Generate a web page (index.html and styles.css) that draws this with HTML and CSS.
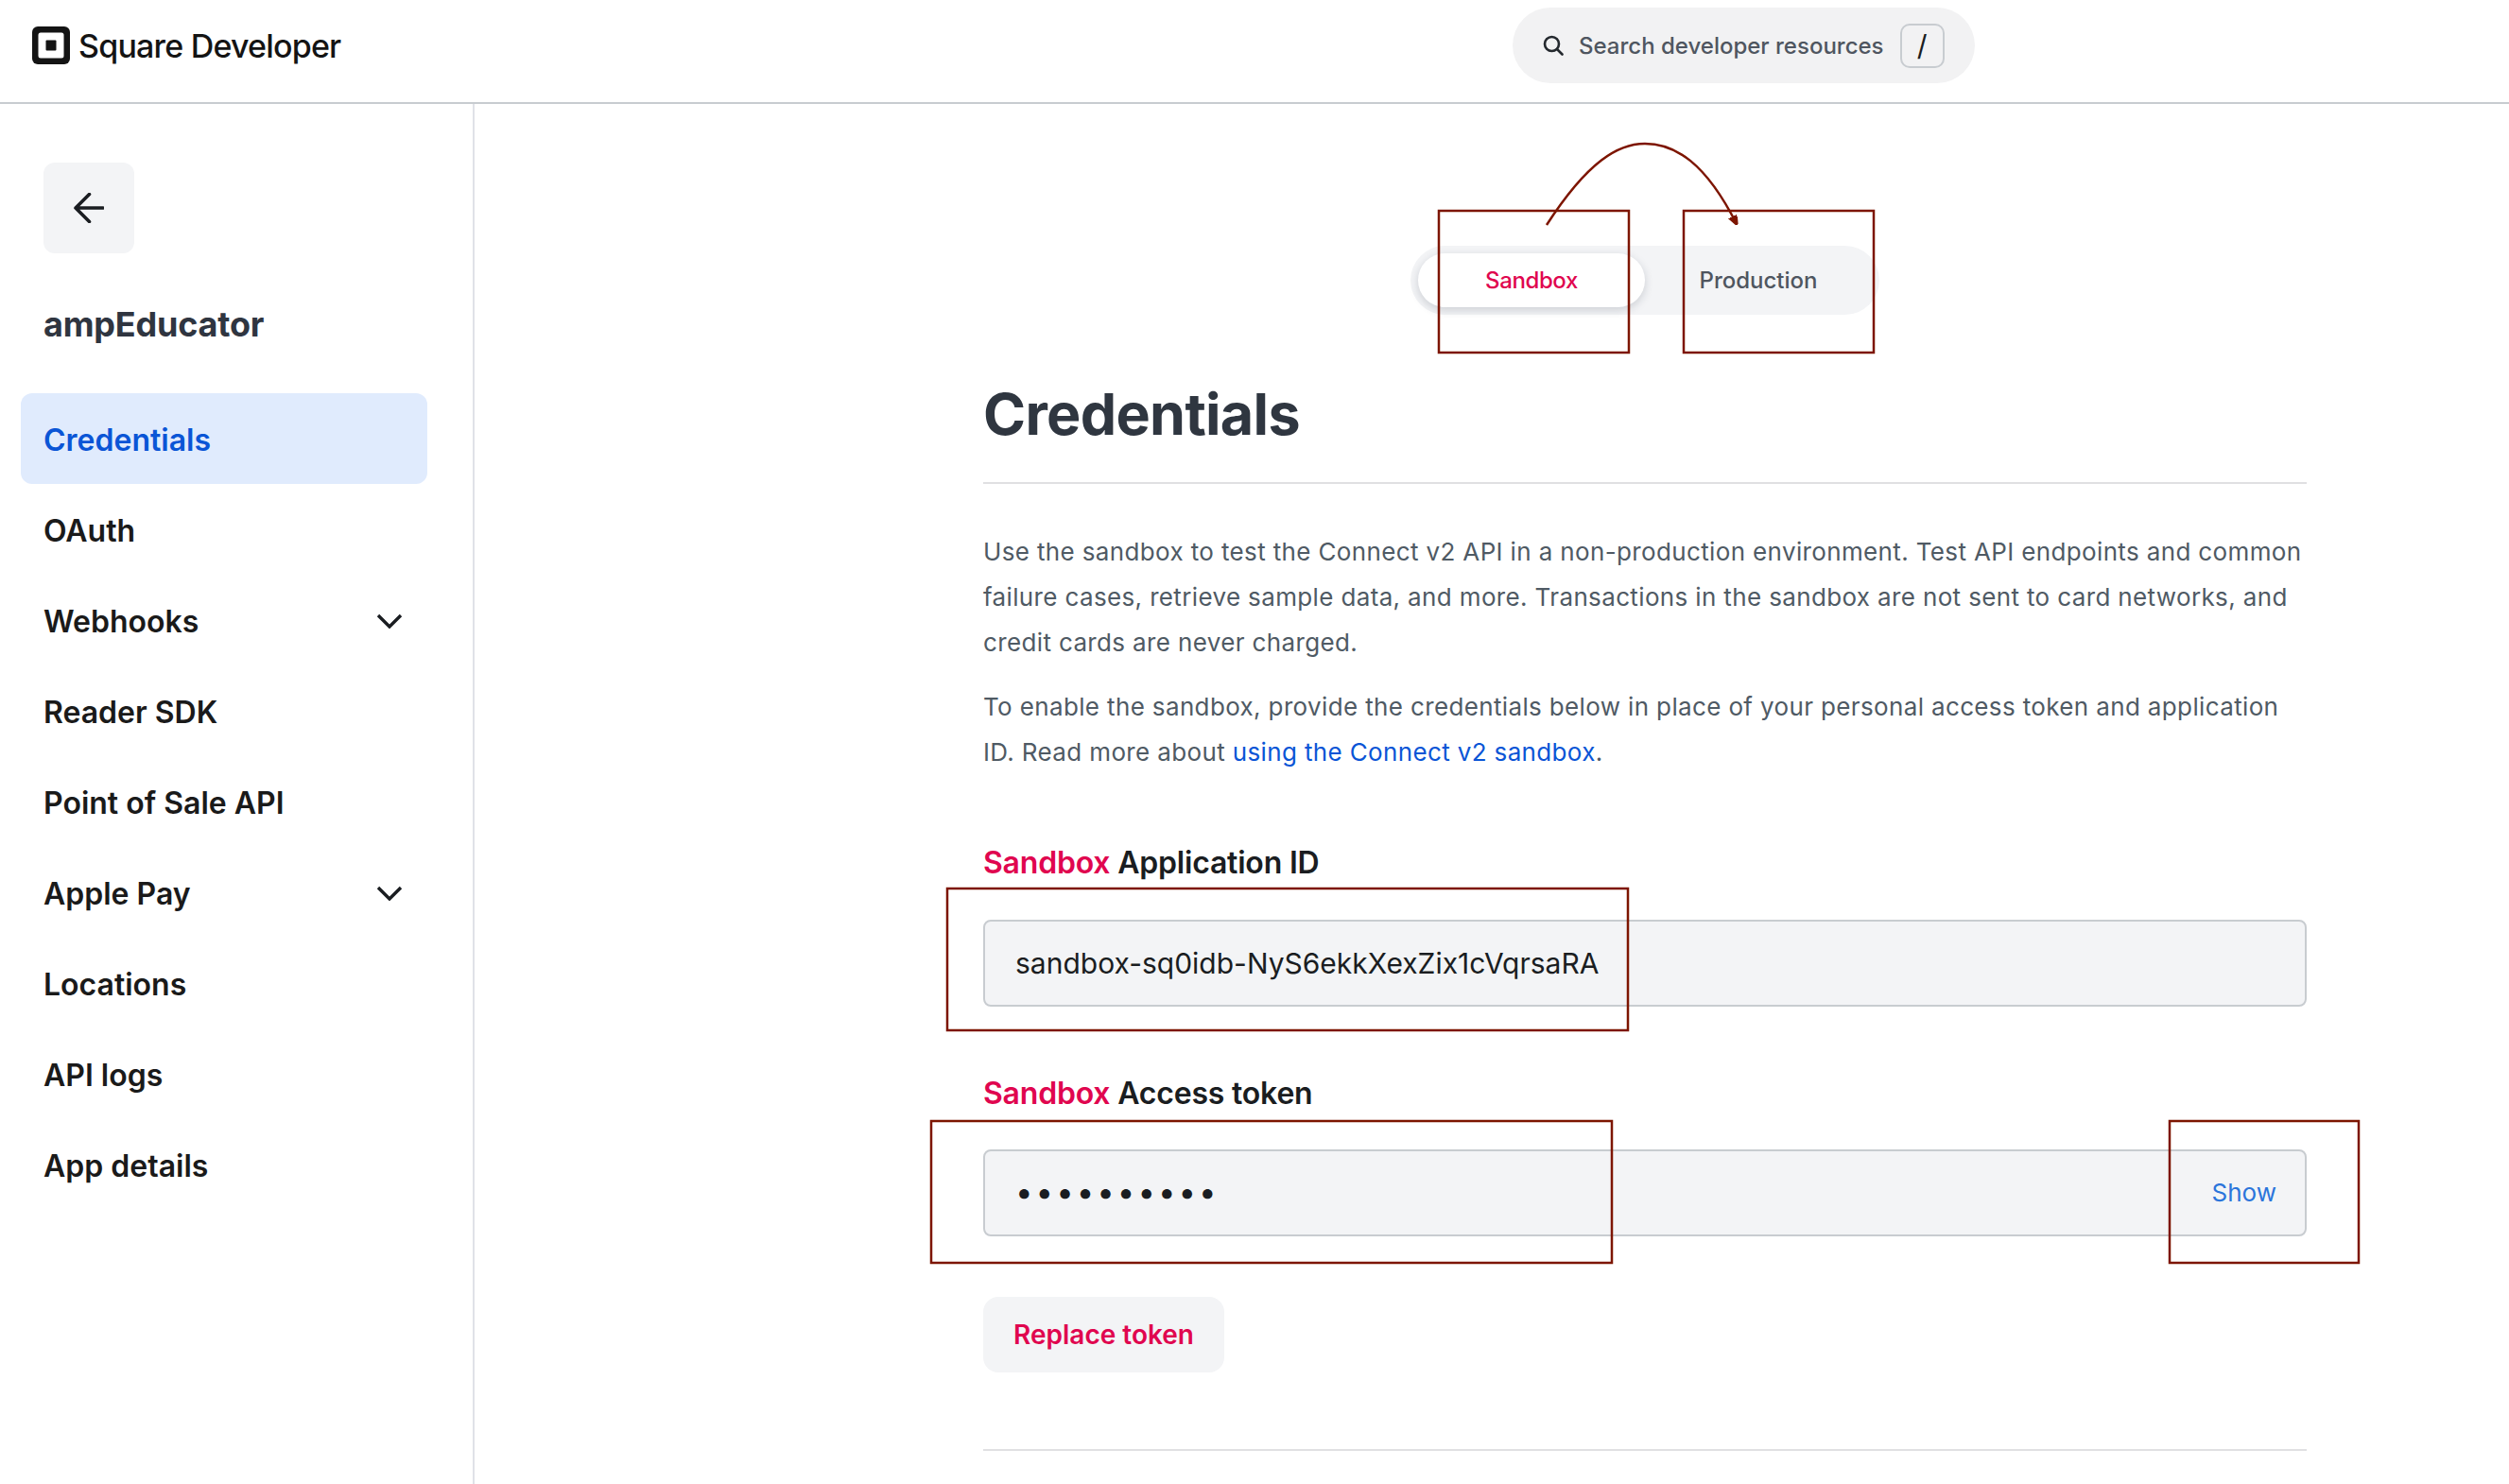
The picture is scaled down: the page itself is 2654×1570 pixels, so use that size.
FILE: index.html
```html
<!DOCTYPE html>
<html lang="en">
<head>
    <meta charset="UTF-8">
    <meta name="viewport" content="width=device-width, initial-scale=1.0">
    <title>Square Developer - Credentials</title>
    <link rel="stylesheet" href="styles.css">
</head>
<body>
    <header class="top-bar">
        <a class="brand">
            <svg class="brand-logo" viewBox="0 0 40 40">
                <rect width="40" height="40" rx="6" fill="#141414"/>
                <rect x="6.5" y="6.5" width="27" height="27" rx="2.5" fill="#fff"/>
                <rect x="14.5" y="14.5" width="11" height="11" rx="1" fill="#141414"/>
            </svg>
            <span class="brand-name">Square Developer</span>
        </a>
        <div class="search">
            <svg class="search-icon" viewBox="0 0 22 22">
                <circle cx="9.5" cy="9.5" r="7.5" fill="none" stroke="#24292e" stroke-width="2.6"/>
                <path d="M15 15l5.5 5.5" fill="none" stroke="#24292e" stroke-width="2.6" stroke-linecap="round"/>
            </svg>
            <span class="search-text">Search developer resources</span>
            <span class="search-key">/</span>
        </div>
    </header>

    <div class="page">
        <aside class="sidebar">
            <button class="back-button">
                <svg viewBox="0 0 32 32" width="32" height="32">
                    <path d="M31 16H2M16.5 1.5L2 16l14.5 14.5" fill="none" stroke="#1a1d21" stroke-width="3.6" stroke-linecap="round" stroke-linejoin="round"/>
                </svg>
            </button>
            <h2 class="app-name">ampEducator</h2>
            <nav class="side-nav">
                <a class="nav-item active">Credentials</a>
                <a class="nav-item">OAuth</a>
                <a class="nav-item">Webhooks
                    <svg class="chevron" viewBox="0 0 28 16"><path d="M2 2l12 12L26 2"/></svg>
                </a>
                <a class="nav-item">Reader SDK</a>
                <a class="nav-item">Point of Sale API</a>
                <a class="nav-item">Apple Pay
                    <svg class="chevron" viewBox="0 0 28 16"><path d="M2 2l12 12L26 2"/></svg>
                </a>
                <a class="nav-item">Locations</a>
                <a class="nav-item">API logs</a>
                <a class="nav-item">App details</a>
            </nav>
        </aside>

        <main class="content">
            <div class="toggle-row">
                <div class="env-toggle">
                    <span class="env-tab selected">Sandbox</span>
                    <span class="env-tab">Production</span>
                </div>
            </div>

            <h1 class="page-title">Credentials</h1>

            <p class="intro">Use the sandbox to test the Connect v2 API in a non-production environment. Test API endpoints and common failure cases, retrieve sample data, and more. Transactions in the sandbox are not sent to card networks, and credit cards are never charged.</p>
            <p class="intro second">To enable the sandbox, provide the credentials below in place of your personal access token and application ID. Read more about <a class="link">using the Connect v2 sandbox</a>.</p>

            <div class="field-label"><span class="env-word">Sandbox</span> Application ID</div>
            <div class="field">sandbox-sq0idb-NyS6ekkXexZix1cVqrsaRA</div>

            <div class="field-label"><span class="env-word">Sandbox</span> Access token</div>
            <div class="field">
                <span class="dots">••••••••••</span>
                <span class="show-link">Show</span>
            </div>

            <button class="replace-button">Replace token</button>
            <hr class="section-rule">
        </main>
    </div>

    <!-- red annotations drawn on top of the screenshot -->
    <svg class="annotations" viewBox="0 0 2654 1570">
        <defs>
            <marker id="arrow-head" markerWidth="10" markerHeight="10" refX="9" refY="4" orient="auto" markerUnits="userSpaceOnUse">
                <path d="M0 0L10 4L0 8z" fill="#7d1500"/>
            </marker>
        </defs>
        <rect x="1522" y="223" width="201" height="150"/>
        <rect x="1781" y="223" width="201" height="150"/>
        <rect x="1002" y="940" width="720" height="150"/>
        <rect x="985" y="1186" width="720" height="150"/>
        <rect x="2295" y="1186" width="200" height="150"/>
        <path d="M1636 238C1680 170 1712 152 1740 152C1772 152 1804 172 1837 237" marker-end="url(#arrow-head)"/>
    </svg>
</body>
</html>
```

FILE: styles.css
```css
html, body {
    height: 100%;
    overflow: hidden;
}

body {
    margin: 0;
    position: relative;
    font-family: Inter, "Liberation Sans", sans-serif;
    background-color: #fff;
    color: #1a1d21;
}

.top-bar {
    height: 96px;
    padding: 0 565px 12px 34px;
    border-bottom: 2px solid #c8ccd0;
    display: flex;
    align-items: center;
    justify-content: space-between;
}

.brand {
    display: flex;
    align-items: center;
    gap: 9px;
}

.brand-logo {
    width: 40px;
    height: 40px;
}

.brand-name {
    font-size: 34px;
    font-weight: 500;
    letter-spacing: -0.8px;
    color: #141414;
}

.search {
    width: 489px;
    height: 80px;
    box-sizing: border-box;
    padding-left: 32px;
    background-color: #f2f2f3;
    border-radius: 40px;
    display: flex;
    align-items: center;
}

.search-icon {
    width: 22px;
    height: 22px;
    margin-right: 16px;
}

.search-text {
    font-size: 24px;
    font-weight: 500;
    color: #4f5660;
    white-space: nowrap;
}

.search-key {
    margin-left: 17px;
    width: 47px;
    height: 47px;
    box-sizing: border-box;
    border: 2px solid #c8ccd0;
    border-radius: 10px;
    display: flex;
    align-items: center;
    justify-content: center;
    font-size: 30px;
    color: #1a1d21;
}

.page {
    display: flex;
    height: calc(100% - 110px);
}

.sidebar {
    width: 500px;
    flex-shrink: 0;
    border-right: 2px solid #e0e2e8;
    padding-top: 62px;
}

.back-button {
    display: flex;
    align-items: center;
    justify-content: center;
    width: 96px;
    height: 96px;
    margin-left: 46px;
    padding: 0;
    border: none;
    border-radius: 12px;
    background-color: #f3f4f6;
}

.app-name {
    margin: 51px 0 49px 46px;
    font-size: 36px;
    line-height: 48px;
    font-weight: 700;
    letter-spacing: -0.2px;
    color: #2f3540;
}

.side-nav {
    margin-left: 22px;
    width: 430px;
}

.nav-item {
    height: 96px;
    box-sizing: border-box;
    padding: 2px 24px 0;
    display: flex;
    align-items: center;
    justify-content: space-between;
    border-radius: 12px;
    font-size: 32px;
    font-weight: 600;
    color: #1a1a1a;
}

.nav-item.active {
    background-color: #e0ebfd;
    color: #0a55d6;
}

.chevron {
    width: 28px;
    height: 16px;
    margin-right: 2px;
    fill: none;
    stroke: #1a1d21;
    stroke-width: 3.4;
}

.content {
    width: 1400px;
    margin-left: 538px;
    padding-top: 150px;
}

.toggle-row {
    display: flex;
    justify-content: center;
}

.env-toggle {
    display: flex;
    padding: 8px;
    background-color: #f3f4f6;
    border-radius: 37px;
}

.env-tab {
    width: 240px;
    height: 57px;
    display: flex;
    align-items: center;
    justify-content: center;
    font-size: 24px;
    font-weight: 500;
    color: #4f5660;
    border-radius: 29px;
}

.env-tab.selected {
    background-color: #fff;
    color: #e0064f;
    letter-spacing: -0.4px;
    box-shadow: 0 3px 10px rgba(30, 40, 60, 0.18);
}

.page-title {
    margin: 67px 0 0;
    padding-bottom: 34px;
    border-bottom: 2px solid #e0e0e2;
    font-size: 61px;
    line-height: 76px;
    font-weight: 700;
    letter-spacing: -0.7px;
    color: #2f3640;
}

.intro {
    margin: 48px 0 0;
    font-size: 26px;
    line-height: 48px;
    letter-spacing: 0.36px;
    color: #4f5a64;
}

.intro.second {
    margin-top: 20px;
}

.link {
    color: #0a55d6;
}

.field-label {
    margin-top: 73px;
    font-size: 32px;
    line-height: 40px;
    font-weight: 600;
    letter-spacing: -0.2px;
    color: #1a1d21;
}

.field-label + .field {
    margin-top: 40px;
}

.field + .field-label {
    margin-top: 72px;
}

.field-label + .field + .field-label + .field {
    margin-top: 39px;
}

.env-word {
    color: #e0064f;
}

.field {
    height: 92px;
    box-sizing: border-box;
    padding: 0 30px 0 32px;
    display: flex;
    align-items: center;
    justify-content: space-between;
    background-color: #f3f4f6;
    border: 2px solid #c8ccd0;
    border-radius: 8px;
    font-size: 30px;
    color: #1a1d21;
}

.dots {
    margin-bottom: 2px;
    font-size: 33px;
    line-height: 1;
    letter-spacing: 3px;
}

.show-link {
    margin-bottom: 2px;
    font-size: 26px;
    color: #2b75db;
}

.replace-button {
    display: block;
    margin-top: 64px;
    width: 255px;
    height: 80px;
    padding: 0;
    border: none;
    border-radius: 16px;
    background-color: #f3f4f6;
    font-family: inherit;
    font-size: 28px;
    font-weight: 600;
    color: #e0064f;
}

.section-rule {
    margin: 81px 0 0;
    border: none;
    border-top: 2px solid #e0e0e2;
}

.annotations {
    position: absolute;
    left: 0;
    top: 0;
    width: 2654px;
    height: 1570px;
    pointer-events: none;
    fill: none;
    stroke: #7d1500;
    stroke-width: 2.5;
}
```
